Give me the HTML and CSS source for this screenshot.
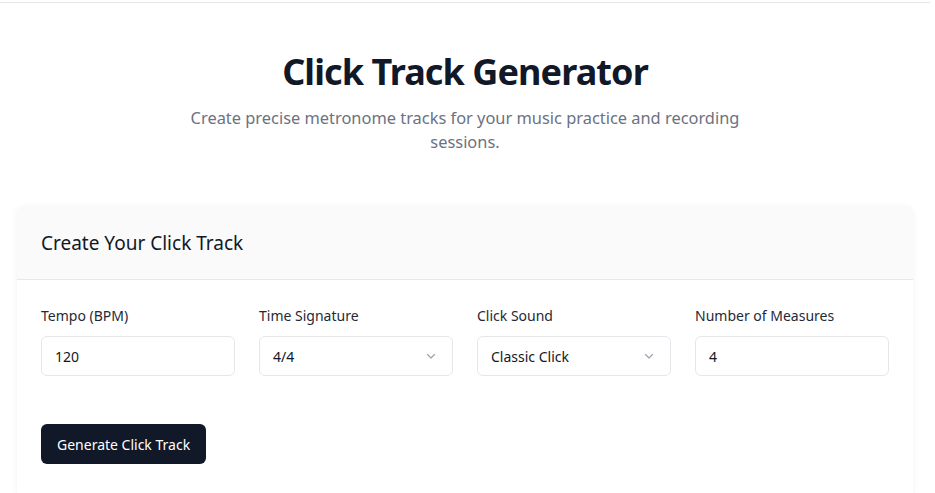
FILE: index.html
```html
<!DOCTYPE html>
<html lang="en">
<head>
<meta charset="utf-8">
<title>Click Track Generator</title>
<link rel="stylesheet" href="styles.css">
</head>
<body>
<div class="topbar"></div>
<main class="page">
  <section class="hero">
    <h1 class="title">Click Track Generator</h1>
    <p class="subtitle">Create precise metronome tracks for your music practice and recording sessions.</p>
  </section>
  <section class="card">
    <div class="card-header">
      <h2 class="card-title">Create Your Click Track</h2>
    </div>
    <div class="card-body">
      <div class="fields">
        <div class="field">
          <label class="label">Tempo (BPM)</label>
          <div class="control">120</div>
        </div>
        <div class="field">
          <label class="label">Time Signature</label>
          <div class="control select">4/4
            <svg class="chev" width="12" height="12" viewBox="0 0 12 12"><path d="M2.5 4.5 6 8l3.5-3.5" fill="none" stroke="#9ca3af" stroke-width="1.2" stroke-linecap="round" stroke-linejoin="round"/></svg>
          </div>
        </div>
        <div class="field">
          <label class="label">Click Sound</label>
          <div class="control select">Classic Click
            <svg class="chev" width="12" height="12" viewBox="0 0 12 12"><path d="M2.5 4.5 6 8l3.5-3.5" fill="none" stroke="#9ca3af" stroke-width="1.2" stroke-linecap="round" stroke-linejoin="round"/></svg>
          </div>
        </div>
        <div class="field">
          <label class="label">Number of Measures</label>
          <div class="control">4</div>
        </div>
      </div>
      <button class="btn">Generate Click Track</button>
    </div>
  </section>
</main>
</body>
</html>
```
FILE: styles.css
```css
* { box-sizing: border-box; }
html, body { margin: 0; padding: 0; }
body {
  background: #ffffff;
  font-family: "Noto Sans", "Open Sans", sans-serif;
  color: #111827;
  padding-right: 5px;
}
.topbar {
  height: 3px;
  border-bottom: 1px solid #e5e7eb;
}
.page {
  max-width: 896px;
  margin: 0 auto;
}
.hero {
  text-align: center;
  padding-top: 45px;
}
.title {
  margin: 0;
  font-size: 36px;
  line-height: 48px;
  font-weight: 700;
  color: #111827;
  letter-spacing: -0.9px;
}
.subtitle {
  margin: 10px auto 0;
  max-width: 576px;
  font-size: 16.4px;
  line-height: 24px;
  color: #6b7280;
}
.card {
  margin-top: 52px;
  background: #fff;
  border-radius: 8px 8px 0 0;
  box-shadow: 0 1px 6px rgba(0,0,0,0.06);
}
.card-header {
  background: #fafafa;
  height: 74px;
  padding: 0 24px;
  display: flex;
  align-items: center;
  border-bottom: 1px solid #e5e7eb;
  border-radius: 8px 8px 0 0;
}
.card-title {
  margin: 0;
  font-size: 19px;
  font-weight: 400;
  color: #111827;
}
.card-body {
  padding: 24px 24px 30px;
}
.fields {
  display: grid;
  grid-template-columns: repeat(4, 1fr);
  gap: 24px;
}
.field {
  display: flex;
  flex-direction: column;
}
.label {
  font-size: 14px;
  line-height: 24px;
  color: #1f2937;
  margin-bottom: 8px;
}
.control {
  height: 40px;
  border: 1px solid #e5e7eb;
  border-radius: 6px;
  padding: 0 13px;
  display: flex;
  align-items: center;
  justify-content: space-between;
  font-size: 14px;
  color: #111827;
}
.chev { margin-right: 2px; }
.btn {
  margin-top: 48px;
  height: 40px;
  padding: 0 16px;
  background: #111827;
  color: #fff;
  border: none;
  border-radius: 6px;
  font-family: inherit;
  font-size: 14px;
}
```
